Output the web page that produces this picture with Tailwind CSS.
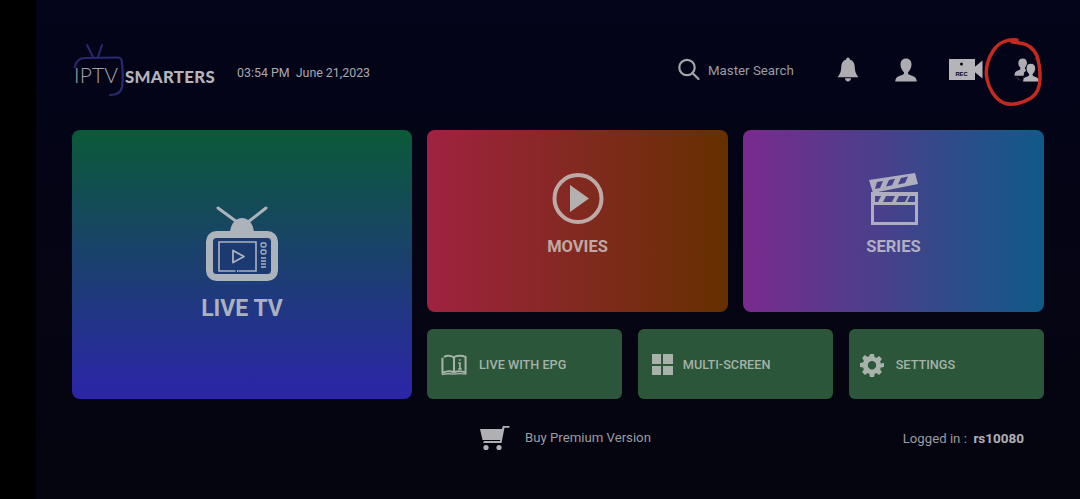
<!DOCTYPE html>
<html><head><meta charset="utf-8">
<script src="https://cdn.jsdelivr.net/npm/@tailwindcss/browser@4"></script>
</head>
<body class="m-0">
<div class="relative flex w-[1080px] h-[499px] overflow-hidden bg-black font-['Roboto',sans-serif] text-[#b4b4b8]">
  <div class="w-[36px] shrink-0 bg-black"></div>
  <main class="w-[1044px] bg-linear-to-b/srgb from-[#04041a] to-[#05050f] pl-[36px] pr-[36px] flex flex-col">
    <header class="h-[130px] flex items-start shrink-0">
      <div class="relative w-[165px] h-[60px] mt-[42px] shrink-0">
        <svg class="absolute left-0 top-0" width="60" height="56" viewBox="0 0 60 56" fill="none">
          <path d="M15 3l6 12M30 3l-4 12" stroke="#2a2870" stroke-width="2" stroke-linecap="round"/>
          <path d="M3 25C4 19 8 16 13 16L46 15.500C49 15.500 50 18 50 21C51 30 51 38 50 45C49 51 44 53 38 53" stroke="#2a2870" stroke-width="2.200" stroke-linecap="round"/>
        </svg>
        <span class="absolute left-[2px] top-[20px] text-[21px] leading-[26px] font-['Lato',sans-serif] font-light text-[#a2a2aa] tracking-[0.2px]">IPTV</span>
        <span class="absolute left-[53px] top-[24px] text-[16.8px] leading-[22px] font-['Lato',sans-serif] font-black text-[#b4b4ba] tracking-[0.3px]">SMARTERS</span>
      </div>
      <div class="w-[133px] mt-[64px] text-[12.4px] leading-[17px] whitespace-nowrap text-[#a9a9ae]">03:54 PM&nbsp; June 21,2023</div>
      <div class="flex items-center mt-[58px] ml-[307px] shrink-0">
        <svg width="24" height="26" viewBox="0 0 24 26" fill="none" stroke="#a5a5ab" stroke-width="2.200" stroke-linecap="round"><circle cx="10" cy="9.500" r="7.700"/><path d="M15.500 15l6 6"/></svg>
        <span class="ml-[7px] text-[13.3px] leading-[26px] text-[#9c9ca3] whitespace-nowrap">Master Search</span>
      </div>
      <svg class="ml-[43px] mt-[57px] shrink-0" width="22" height="25" viewBox="0 0 24 26" preserveAspectRatio="none" fill="#acacb1"><path d="M12 .5c1.200 0 2 .8 2 2 3.500 1 5.400 3.800 5.400 8 0 4.200 1 7 4 10.500H.6c3-3.500 4-6.300 4-10.500 0-4.200 1.900-7 5.400-8 0-1.200.8-2 2-2zM8.600 22h6.800c-.3 2-1.700 3.400-3.400 3.400S8.900 24 8.600 22z"/></svg>
      <svg class="ml-[36px] mt-[58px] shrink-0" width="22" height="24" viewBox="0 0 24 26" preserveAspectRatio="none" fill="#acacb1"><path d="M12 .5c3.800 0 6 2.800 6 6.500 0 3.500-2 7-3.800 8.500l.3 2 6 2.500c2 1 3 2.500 3.300 5.500H.2c.3-3 1.300-4.500 3.300-5.500l6-2.500.3-2C8 14 6 10.500 6 7c0-3.700 2.200-6.500 6-6.500z"/></svg>
      <svg class="ml-[32px] mt-[59px] shrink-0" width="34" height="21" viewBox="0 0 34 21"><path fill="#b4b4b9" d="M0 0h26v21H0zM25 8.500L33.500 1.500v18L25 12.500z"/><circle cx="12.500" cy="5" r="1.500" fill="#04041a"/><text x="12.500" y="16.500" text-anchor="middle" font-family="Liberation Sans" font-size="5.800" font-weight="700" fill="#04041a">REC</text></svg>
      <svg class="ml-[31px] mt-[57px] shrink-0" width="25" height="26" viewBox="0 0 26 26"><path fill="#acacb1" d="M9 1c3 0 4.500 2 4.500 4.600 0 2-1 3.900-2 4.900v1.500l2 1-3 2.500-.5 3.500H.5c0-3 .7-4.200 2.500-5l3.500-1.500V10.500C5.500 9.500 4.500 7.600 4.500 5.600 4.500 3 6 1 9 1z"/><path fill="#b4b4b9" stroke="#04041a" stroke-width="1" d="M17.500 6c3.200 0 5 2.100 5 5.200 0 2.600-1.300 4.700-2.700 6v1.500l4 1.700c1.500.7 2.200 1.800 2.200 5.100H9c0-3.300.7-4.400 2.200-5.100l4-1.700v-1.500c-1.400-1.300-2.700-3.400-2.700-6 0-3.100 1.800-5.200 5-5.200z"/><path d="M21 1c2 .5 3.500 2 4 4M3 20.500c.5 1.500 1.500 2.500 3 3" fill="none" stroke="#8a3a30" stroke-width=".8"/></svg>
    </header>

    <section class="grid grid-cols-[340px_1fr] gap-x-[15px] h-[269px] shrink-0">
      <div class="rounded-[8px] bg-linear-to-b/srgb from-[#0a5a38] to-[#2c25a8] flex flex-col items-center pt-[76px]">
        <svg width="76" height="78" viewBox="0 0 76 78" fill="none">
          <path d="M14 2l19 14M62 2L44 16" stroke="#adb3bb" stroke-width="3" stroke-linecap="round"/>
          <path d="M26 26c1-9 6-14 12-14s11 5 12 14z" fill="#adb3bb"/>
          <rect x="5.500" y="28.500" width="65" height="43" rx="7" fill="#1c3a72" stroke="#adb3bb" stroke-width="7"/>
          <path d="M15 36h37v29H15z" stroke="#adb3bb" stroke-width="1.600"/>
          <path d="M29 44.500l11 6-11 6z" stroke="#adb3bb" stroke-width="1.800" stroke-linejoin="round"/>
          <path d="M31.500 65h3" stroke="#1c3a72" stroke-width="2"/><path d="M33 65h1" stroke="#adb3bb" stroke-width="2"/>
          <rect x="57" y="37" width="5" height="4" rx="1.500" stroke="#adb3bb" stroke-width="1.300"/><rect x="57" y="44" width="5" height="4" rx="1.500" stroke="#adb3bb" stroke-width="1.300"/>
          <path d="M57 52h5M57 55h5M57 58h5M57 61h5" stroke="#adb3bb" stroke-width="1.400"/>
        </svg>
        <div class="mt-[11px] text-[23px] leading-[28px] font-bold text-[#abb2bd]">LIVE TV</div>
      </div>
      <div class="flex flex-col gap-y-[17px]">
        <div class="grid grid-cols-2 gap-x-[15px] h-[182px]">
          <div class="rounded-[8px] bg-linear-to-r/srgb from-[#a02240] to-[#653000] flex flex-col items-center pt-[43px]">
            <svg width="52" height="52" viewBox="0 0 52 52"><circle cx="26" cy="25.500" r="23.500" fill="none" stroke="#bcaaa8" stroke-width="4"/><path d="M18 12l19 13.500L18 39z" fill="#b4b0ae"/></svg>
            <div class="mt-[12px] text-[16.500px] leading-[20px] font-bold text-[#c0a8a4]">MOVIES</div>
          </div>
          <div class="rounded-[8px] bg-linear-to-r/srgb from-[#7a2a8e] to-[#0f5a88] flex flex-col items-center pt-[43px]">
            <svg width="50" height="52" viewBox="0 0 50 52" fill="#aeaebf"><path fill-rule="evenodd" d="M0 7L46 0l3 11-45 9zM8 9l-2 7 5-1 3-7zM20 7l-3 6.500 6-1.200 3-6.500zM32 5l-3 6.500 7-1.500 3-6.500z"/><path fill-rule="evenodd" d="M2 19h47v33H2zM6 23v6h3l3-6zM17 23l-3 6h9l3-6zM30 23l-3 6h9l3-6zM41 23l-3 6h8v-6zM5 32v17h41V32z"/></svg>
            <div class="mt-[12px] text-[16.500px] leading-[20px] font-bold text-[#b0b0c4]">SERIES</div>
          </div>
        </div>
        <div class="grid grid-cols-3 gap-x-[15.500px] h-[70px]">
          <div class="rounded-[6px] bg-[#2c5639] flex items-center pl-[14px] pt-[1px]">
            <svg width="26" height="22" viewBox="0 0 27 22" fill="none" stroke="#a6b3aa" stroke-width="2.100"><path d="M3 2.500C6 1 10 1 13.500 3v15.500C10 17 6 17 1.500 19V3.500M13.500 3C16 1 22 1 25.500 2.500v16.500c-4-2-8-2-12-.5"/><path d="M1 21c4-1.200 8-1.200 12.500-.5 4-.7 8-.7 12.500 0" stroke-width="1.500"/><path d="M19.500 5v1.500M18 9h1.700v6M18 15h3.400" stroke-width="1.700"/></svg>
            <span class="ml-[12px] text-[12.700px] leading-[18px] font-medium text-[#a5b2a9] whitespace-nowrap">LIVE WITH EPG</span>
          </div>
          <div class="rounded-[6px] bg-[#2c5639] flex items-center pl-[14px] pt-[1px]">
            <div class="grid grid-cols-2 gap-[2px] w-[21px] h-[21px] shrink-0"><i class="bg-[#a8b2ab]"></i><i class="bg-[#a8b2ab]"></i><i class="bg-[#a8b2ab]"></i><i class="bg-[#a8b2ab]"></i></div>
            <span class="ml-[10px] text-[12.700px] leading-[18px] font-medium text-[#a5b2a9] whitespace-nowrap">MULTI-SCREEN</span>
          </div>
          <div class="rounded-[6px] bg-[#2c5639] flex items-center pl-[11px] pt-[1px]">
            <svg width="24" height="24" viewBox="0 0 24 24" fill="#a8b2ab"><path fill-rule="evenodd" d="M10 1h4l.6 3.100 1.800.8 2.700-1.800 2.800 2.800-1.800 2.700.8 1.800L24 10v4l-3.100.6-.8 1.800 1.800 2.700-2.800 2.800-2.700-1.800-1.800.8L14 24h-4l-.6-3.100-1.800-.8-2.700 1.800-2.800-2.800 1.800-2.700-.8-1.800L0 14v-4l3.100-.6.8-1.800-1.800-2.700 2.800-2.800 2.700 1.800 1.800-.8zM12 8a4.200 4.200 0 100 8.400A4.200 4.200 0 0012 8z"/></svg>
            <span class="ml-[12px] text-[12.700px] leading-[18px] font-medium text-[#a5b2a9] whitespace-nowrap">SETTINGS</span>
          </div>
        </div>
      </div>
    </section>

    <footer class="flex items-center h-[26px] mt-[26px] shrink-0">
      <svg class="ml-[408px] shrink-0" width="30" height="26" viewBox="0 0 30 26" fill="#b0b0b4"><path d="M0 4h22.500l-1.500 11H2.500zM22 3.500l1-2.500h6.500v1.800h-5L21.500 18H3l1-2h16z"/><circle cx="6" cy="22.500" r="2.600"/><circle cx="19" cy="22.500" r="2.600"/></svg>
      <span class="ml-[15px] text-[13.200px] leading-[20px] text-[#9c9ca2] whitespace-nowrap">Buy Premium Version</span>
      <div class="ml-auto mr-[20px] text-[13.200px] leading-[20px] whitespace-nowrap text-[#9c9ca2]">Logged in :&nbsp; <b class="font-bold text-[13.500px] text-[#b0b0b5]">rs10080</b></div>
    </footer>
  </main>
  <svg class="absolute left-[979px] top-[36px]" width="66" height="72" viewBox="0 0 66 72" fill="none"><path d="M38 4c-10-1-19 3-24 11C9 23 6 33 8 43c2 10 8 20 17 24 8 3 19 0 27-5 6-4 9-12 9-20 0-8-1-16-3-22-3-7-9-12-17-13-3-.5-6-1-8-1" stroke="#c42a1f" stroke-width="3.500" stroke-linecap="round"/></svg>
</div>
</body></html>
